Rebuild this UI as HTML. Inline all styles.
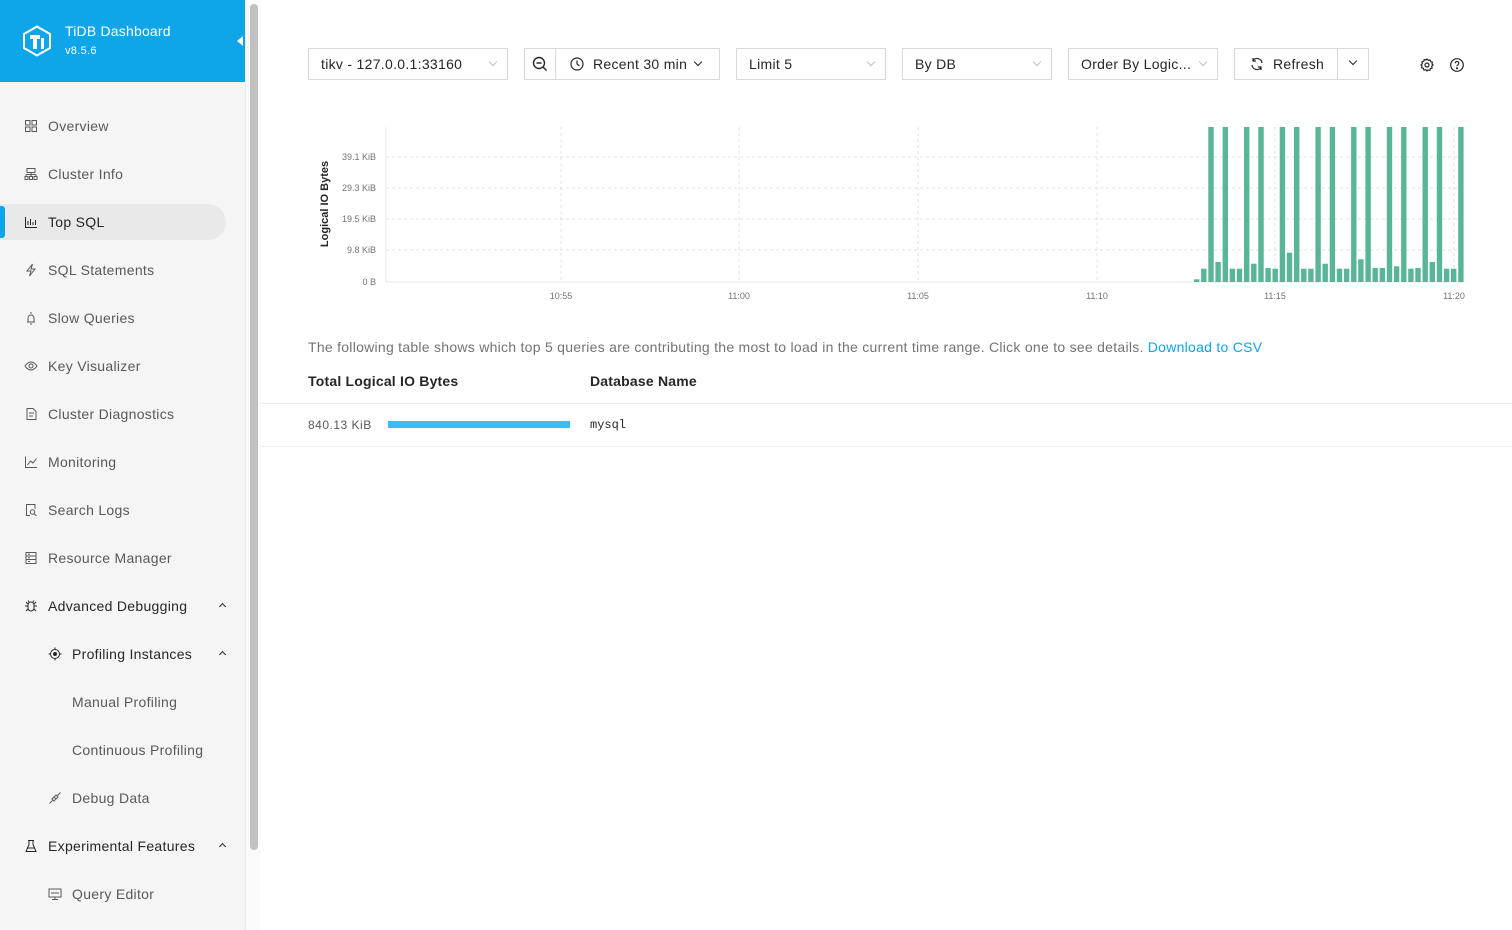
<!DOCTYPE html>
<html><head><meta charset="utf-8"><style>
*{box-sizing:border-box;margin:0;padding:0}
body{width:1512px;height:930px;overflow:hidden;font-family:"Liberation Sans",sans-serif;background:#fff;position:relative;color:#262626}
.side{position:absolute;left:0;top:0;width:245px;height:930px;background:#f5f5f5}
.hdr{height:82px;background:#0ea5e9;position:relative;color:#fff}
.hdr .t{position:absolute;left:65px;top:23px;font-size:14px;letter-spacing:0.2px}
.hdr .v{position:absolute;left:65px;top:45px;font-size:11px;letter-spacing:0.3px}
.hdr .arr{position:absolute;left:237px;top:36px;width:0;height:0;border-top:5px solid transparent;border-bottom:5px solid transparent;border-right:6px solid #fff}
.item{position:absolute;left:0;height:36px;width:226px;font-size:14px;color:#595959;line-height:36px;letter-spacing:0.3px}
.item .ic{position:absolute;left:24px;top:11px;width:14px;height:14px}
.item span{position:absolute;left:48px}
.item.sub span{left:72px}
.item.sub .ic{left:48px}
.item.dark{color:#262626}
.active{background:#e9e9e9;border-radius:0 18px 18px 0;color:#262626}
.active:before{content:"";position:absolute;left:0;top:2px;width:5px;height:32px;background:#0ea5e9;border-radius:0 3px 3px 0}
.car{position:absolute;left:220px;top:16px;width:5px;height:5px;border-left:1.8px solid #262626;border-top:1.8px solid #262626;transform:rotate(45deg)}
.sb{position:absolute;left:245px;top:0;width:15px;height:930px;background:#fafafa;border-left:1px solid #eee}
.sb i{position:absolute;left:4px;top:4px;width:8px;height:846px;background:#c1c1c1;border-radius:4px}
.box{position:absolute;top:48px;height:32px;border:1px solid #d9d9d9;font-size:14px;line-height:30px;color:#262626;padding-left:12px;background:#fff;letter-spacing:0.3px}
.dd{position:absolute;right:11px;top:10px;width:6px;height:6px;border-right:1px solid #bfbfbf;border-bottom:1px solid #bfbfbf;transform:rotate(45deg)}
.lbl{font-size:9px;fill:#737373}
</style></head><body>
<div class="side">
 <div class="hdr">
  <svg style="position:absolute;left:22px;top:25px" width="30" height="32" viewBox="0 0 30 32"><path d="M15 1.5L28 9v14L15 30.5 2 23V9z" fill="none" stroke="#fff" stroke-width="2"/><path d="M8 10h10v4h-3v10h-4V14H8z M19 13h3v11h-3z" fill="#fff"/></svg>
  <div class="t">TiDB Dashboard</div><div class="v">v8.5.6</div><div class="arr"></div>
 </div>
 <div class="item" style="top:108px"><svg class="ic" viewBox="0 0 14 14" fill="none" stroke="#595959"><rect x="1.5" y="1.5" width="4.5" height="4.5"/><rect x="8" y="1.5" width="4.5" height="4.5"/><rect x="1.5" y="8" width="4.5" height="4.5"/><rect x="8" y="8" width="4.5" height="4.5"/></svg><span>Overview</span></div>
 <div class="item" style="top:156px"><svg class="ic" viewBox="0 0 14 14" fill="none" stroke="#595959"><rect x="3" y="1.5" width="8" height="4"/><path d="M7 5.5v2M2 7.5h10M2 7.5v2M12 7.5v2M7 7.5v2"/><rect x="1" y="9.5" width="3" height="3"/><rect x="5.5" y="9.5" width="3" height="3"/><rect x="10" y="9.5" width="3" height="3"/></svg><span>Cluster Info</span></div>
 <div class="item active" style="top:204px"><svg class="ic" viewBox="0 0 14 14" fill="none" stroke="#262626"><path d="M1.5 2v10.5H13M4 10V6M6.5 10V4M9 10V7M11.5 10V5"/></svg><span>Top SQL</span></div>
 <div class="item" style="top:252px"><svg class="ic" viewBox="0 0 14 14" fill="none" stroke="#595959"><path d="M8.5 1L3 8h4l-1.5 5L11 6H7z"/></svg><span>SQL Statements</span></div>
 <div class="item" style="top:300px"><svg class="ic" viewBox="0 0 14 14" fill="none" stroke="#595959"><path d="M7 1v2M4 11V7a3 3 0 016 0v4zM3 11h8M6 13h2"/></svg><span>Slow Queries</span></div>
 <div class="item" style="top:348px"><svg class="ic" viewBox="0 0 14 14" fill="none" stroke="#595959"><path d="M1 7s2.5-4 6-4 6 4 6 4-2.5 4-6 4-6-4-6-4z"/><circle cx="7" cy="7" r="2"/></svg><span>Key Visualizer</span></div>
 <div class="item" style="top:396px"><svg class="ic" viewBox="0 0 14 14" fill="none" stroke="#595959"><path d="M3 1.5h6l3 3v8H3z M5 6h5M5 9h4"/></svg><span>Cluster Diagnostics</span></div>
 <div class="item" style="top:444px"><svg class="ic" viewBox="0 0 14 14" fill="none" stroke="#595959"><path d="M1.5 1.5v11H13M3.5 10l3-4 2.5 2 3.5-4.5"/></svg><span>Monitoring</span></div>
 <div class="item" style="top:492px"><svg class="ic" viewBox="0 0 14 14" fill="none" stroke="#595959"><path d="M11 6V1.5H2.5v11H6"/><circle cx="8.5" cy="9" r="2.2"/><path d="M10 10.5l2.5 2.5"/></svg><span>Search Logs</span></div>
 <div class="item" style="top:540px"><svg class="ic" viewBox="0 0 14 14" fill="none" stroke="#595959"><rect x="2" y="1.5" width="10" height="11"/><path d="M2 5h10M2 8.5h10M4 3.3h2M4 6.8h2M4 10.5h2"/></svg><span>Resource Manager</span></div>
 <div class="item dark" style="top:588px"><svg class="ic" viewBox="0 0 14 14" fill="none" stroke="#262626"><path d="M4 6a3 3 0 016 0v3a3 3 0 01-6 0zM4 7H1M10 7h3M4 10l-2 2M10 10l2 2M4 5L2 3M10 5l2-2M5 3L4 1.5M9 3l1-1.5"/></svg><span>Advanced Debugging</span><div class="car"></div></div>
 <div class="item sub dark" style="top:636px"><svg class="ic" viewBox="0 0 14 14" fill="none" stroke="#262626"><circle cx="7" cy="7" r="4.5"/><circle cx="7" cy="7" r="1.5" fill="#262626"/><path d="M7 0.5v2M7 11.5v2M0.5 7h2M11.5 7h2"/></svg><span>Profiling Instances</span><div class="car"></div></div>
 <div class="item sub" style="top:684px"><span>Manual Profiling</span></div>
 <div class="item sub" style="top:732px"><span>Continuous Profiling</span></div>
 <div class="item sub" style="top:780px"><svg class="ic" viewBox="0 0 14 14" fill="none" stroke="#595959"><path d="M1.5 12.5l3-3M12.5 1.5l-3 3M4 8l2-2 2 2-2 2zM6 6l2-2 2 2-2 2"/></svg><span>Debug Data</span></div>
 <div class="item dark" style="top:828px"><svg class="ic" viewBox="0 0 14 14" fill="none" stroke="#262626"><path d="M4 1.5h6M5 1.5v4L2 12.5h10L9 5.5v-4M3.5 9h7"/></svg><span>Experimental Features</span><div class="car"></div></div>
 <div class="item sub" style="top:876px"><svg class="ic" viewBox="0 0 14 14" fill="none" stroke="#595959"><rect x="1" y="2" width="12" height="8"/><path d="M7 10v2M4 12.5h6M3 6h8"/></svg><span>Query Editor</span></div>
</div>
<div class="sb"><i></i></div>

<div class="box" style="left:308px;width:200px">tikv - 127.0.0.1:33160<div class="dd"></div></div>
<div class="box" style="left:524px;width:32px;padding:0"><svg style="position:absolute;left:7px;top:7px" width="16" height="16" viewBox="0 0 16 16" fill="none" stroke="#262626" stroke-width="1.4"><circle cx="7" cy="7" r="5.5"/><path d="M4.5 7h5M11 11l3.5 3.5"/></svg></div>
<div class="box" style="left:555px;width:165px;padding-left:37px"><svg style="position:absolute;left:14px;top:8px" width="14" height="14" viewBox="0 0 14 14" fill="none" stroke="#262626" stroke-width="1.2"><circle cx="7" cy="7" r="6"/><path d="M7 3.5V7l2.5 2"/></svg>Recent 30 min<div class="dd" style="right:18px;border-color:#262626"></div></div>
<div class="box" style="left:736px;width:150px">Limit 5<div class="dd"></div></div>
<div class="box" style="left:902px;width:150px">By DB<div class="dd"></div></div>
<div class="box" style="left:1068px;width:150px">Order By Logic...<div class="dd"></div></div>
<div class="box" style="left:1234px;width:104px;padding-left:38px"><svg style="position:absolute;left:15px;top:8px" width="14" height="14" viewBox="0 0 14 14" fill="none" stroke="#262626" stroke-width="1.2"><path d="M12 6A5 5 0 003 3.5M2 8a5 5 0 009 2.5M3 1v3h3M11 13v-3H8"/></svg>Refresh</div>
<div class="box" style="left:1337px;width:32px"><div class="dd" style="right:12px;top:9px;border-color:#262626"></div></div>
<svg style="position:absolute;left:1419px;top:57px" width="16" height="16" viewBox="0 0 16 16" fill="none" stroke="#262626" stroke-width="1.2"><circle cx="8" cy="8" r="2"/><path d="M8 2l1.3 1.3 1.8-.4.5 1.8 1.8.5-.4 1.8L14 8l-1.3 1.3.4 1.8-1.8.5-.5 1.8-1.8-.4L8 14l-1.3-1.3-1.8.4-.5-1.8-1.8-.5.4-1.8L2 8l1.3-1.3-.4-1.8 1.8-.5.5-1.8 1.8.4z"/></svg>
<svg style="position:absolute;left:1449px;top:57px" width="16" height="16" viewBox="0 0 16 16" fill="none" stroke="#262626" stroke-width="1.2"><circle cx="8" cy="8" r="6.3"/><path d="M6.2 6.3a1.8 1.8 0 113 1.3c-.7.5-1.2.8-1.2 1.7"/><circle cx="8" cy="11.3" r=".5" fill="#262626"/></svg>

<svg style="position:absolute;left:0;top:0" width="1512" height="320">
 <g stroke="#dde0ec" stroke-dasharray="3,3" stroke-width="1">
  <path d="M386 157H1465M386 188H1465M386 219H1465M386 250H1465"/>
  <path d="M561 127V282M739 127V282M918 127V282M1097 127V282M1275 127V282M1454 127V282"/>
 </g>
 <path d="M386 127V282H1465" stroke="#e8e8e8" fill="none"/>
 <g class="lbl" text-anchor="end" font-family="Liberation Sans"><text x="376" y="160">39.1 KiB</text><text x="376" y="191">29.3 KiB</text><text x="376" y="222">19.5 KiB</text><text x="376" y="253">9.8 KiB</text><text x="376" y="285">0 B</text></g>
 <g class="lbl" text-anchor="middle" font-family="Liberation Sans"><text x="561" y="299">10:55</text><text x="739" y="299">11:00</text><text x="918" y="299">11:05</text><text x="1097" y="299">11:10</text><text x="1275" y="299">11:15</text><text x="1454" y="299">11:20</text></g>
 <text transform="translate(328,204) rotate(-90)" text-anchor="middle" font-size="11" font-weight="bold" fill="#262626" font-family="Liberation Sans">Logical IO Bytes</text>
 <g fill="#59b597" id="bars"></g>
</svg>
<script>
var h=[2.7,13.3,155,20,155,13.3,13.3,155,18.3,155,14,13.3,155,29.3,155,13.3,13.3,155,18.3,155,13.3,13.3,155,22.7,155,14,14,155,15.7,155,13.3,14,155,20,155,13.3,13.3,155];
var g=document.getElementById('bars'),s='';
for(var i=0;i<h.length;i++){var x=1194+i*7.14;s+='<rect x="'+x.toFixed(1)+'" y="'+(282-h[i]).toFixed(1)+'" width="5.4" height="'+h[i]+'"/>';}
g.innerHTML=s;
</script>
<div style="position:absolute;left:308px;top:339px;font-size:14px;color:#737373;letter-spacing:0.27px;white-space:nowrap">The following table shows which top 5 queries are contributing the most to load in the current time range. Click one to see details. <span style="color:#0ea5e9">Download to CSV</span></div>
<div style="position:absolute;left:308px;top:373px;font-size:14px;font-weight:bold;color:#262626;letter-spacing:0.2px">Total Logical IO Bytes</div>
<div style="position:absolute;left:590px;top:373px;font-size:14px;font-weight:bold;color:#262626;letter-spacing:0.2px">Database Name</div>
<div style="position:absolute;left:260px;top:403px;width:1252px;height:44px;border-top:1px solid #eee;border-bottom:1px solid #eee"></div>
<div style="position:absolute;left:308px;top:418px;font-size:12px;color:#595959;letter-spacing:0.5px">840.13 KiB</div>
<div style="position:absolute;left:388px;top:421px;width:182px;height:7px;background:#38bdf8"></div>
<div style="position:absolute;left:590px;top:418px;font-size:12px;font-family:'Liberation Mono',monospace;color:#262626">mysql</div>
</body></html>
